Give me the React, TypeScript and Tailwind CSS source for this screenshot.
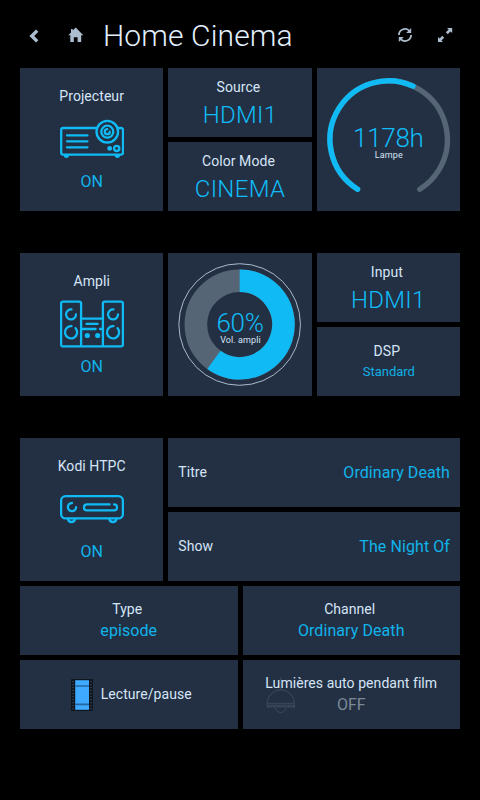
import type { ReactNode } from "react";

const BLUE = "#0fbaf5";

function Tile({ className = "", children }: { className?: string; children: ReactNode }) {
  return <div className={`bg-[#233043] overflow-hidden ${className}`}>{children}</div>;
}

function Label({ className = "", children }: { className?: string; children: ReactNode }) {
  return (
    <div className={`text-sm leading-4 tracking-[0.06px] whitespace-nowrap text-[#d5e5f7] ${className}`}>{children}</div>
  );
}

/** Square switch tile: title, 64px pictogram, state. */
function SwitchTile({ label, state, children }: { label: string; state: string; children: ReactNode }) {
  return (
    <Tile className="flex h-[143px] flex-col items-center pt-5">
      <Label>{label}</Label>
      <svg
        viewBox="0 0 64 64"
        className="mt-[3px] h-16 w-16 shrink-0"
        fill="none"
        stroke={BLUE}
        strokeWidth="2.3"
        strokeLinecap="round"
      >
        {children}
      </svg>
      <div className="mt-px text-base leading-5 text-[#10b4eb]">{state}</div>
    </Tile>
  );
}

/** Half-height tile with a stacked label and value. */
function ValueTile({
  label,
  value,
  size = "lg",
}: {
  label: string;
  value: string;
  size?: "lg" | "md" | "sm";
}) {
  const styles = {
    lg: "mt-1.5 text-2xl leading-7 font-light tracking-[0.3px] text-[#0fbcf8]",
    md: "mt-0.5 text-base leading-6 tracking-[0.08px] text-[#10b4eb]",
    sm: "mt-[3px] pl-px text-[13px] leading-5 text-[#10b0e6]",
  };
  const pad = { lg: "pt-[11px]", md: "pt-[15px]", sm: "pt-4" };
  return (
    <Tile className={`h-[69px] text-center ${pad[size]}`}>
      <Label className="pr-[3px]">{label}</Label>
      <div className={styles[size]}>{value}</div>
    </Tile>
  );
}

function InfoRow({ label, value }: { label: string; value: string }) {
  return (
    <Tile className="flex h-[69px] items-center justify-between px-2.5">
      <Label className="-mt-px">{label}</Label>
      <div className="text-base tracking-[0.08px] text-[#10b4eb]">{value}</div>
    </Tile>
  );
}

function GaugeText({ value, label }: { value: string; label: string }) {
  return (
    <div className="col-start-1 row-start-1 pt-[58px] text-center">
      <div className="text-[26px] leading-6 font-light tracking-[-0.3px] text-[#0fbcf8]">{value}</div>
      <div className="pl-px text-[9px] leading-[10px] tracking-[0.1px] text-[#d5e5f7]">{label}</div>
    </div>
  );
}

function LampGauge() {
  return (
    <Tile className="grid h-[143px] grid-cols-1">
      <svg viewBox="0 0 143.33 143" className="col-start-1 row-start-1 h-[143px] w-full" fill="none" strokeLinecap="round" strokeWidth="5.4">
        <circle cx="71.67" cy="71.5" r="58.7" pathLength="360" strokeDasharray="296 64" transform="rotate(122 71.67 71.5)" stroke="#566576" />
        <circle cx="71.67" cy="71.5" r="58.7" pathLength="360" strokeDasharray="172.5 187.5" transform="rotate(122 71.67 71.5)" stroke={BLUE} />
      </svg>
      <GaugeText value="1178h" label="Lampe" />
    </Tile>
  );
}

function VolumeGauge() {
  return (
    <Tile className="grid h-[143px] grid-cols-1">
      <svg viewBox="0 0 143.33 143" className="col-start-1 row-start-1 h-[143px] w-full" fill="none">
        <circle cx="71.67" cy="71.5" r="60.8" stroke="#a9bacb" strokeWidth="1" />
        <circle cx="71.67" cy="71.5" r="43.8" stroke="#566576" strokeWidth="22.6" />
        <path d="M71.67 27.7A43.8 43.8 0 1 1 45.92 106.93" stroke={BLUE} strokeWidth="22.6" />
      </svg>
      <GaugeText value="60%" label="Vol. ampli" />
    </Tile>
  );
}

function Header() {
  return (
    <header className="flex h-[68px] items-center text-[#acbdcf]">
      <svg viewBox="0 0 10 14" className="mt-[3px] ml-[29px] h-3.5 w-2.5">
        <path d="M8.2 1.6L2.8 7L8.2 12.4" fill="none" stroke="currentColor" strokeWidth="3.4" />
      </svg>
      <svg viewBox="0 0 16 16" className="mt-px ml-[29px] h-4 w-4" fill="currentColor">
        <path d="M7.7 .5L15.3 8.3H13.2V15H9.6V10.3H5.8V15H2.3V8.3H.2L3 5.4V2H4.7V3.6Z" />
      </svg>
      <h1 className="mt-1 ml-[19px] text-[30px] leading-9 font-light tracking-[0.12px] text-[#e2f0ff]">Home Cinema</h1>
      <svg viewBox="0 0 16 16" className="mt-[2px] ml-auto h-4 w-4" fill="none" stroke="currentColor" strokeWidth="1.8">
        <path d="M1.9 8A6.1 6.1 0 0 1 12.1 3.6M14.1 8A6.1 6.1 0 0 1 3.9 12.4" />
        <path d="M14.2 1V6H9.2ZM1.8 15V10H6.8Z" fill="currentColor" stroke="none" />
      </svg>
      <svg viewBox="0 0 16 16" className="mt-[2px] mr-[27px] ml-6 h-4 w-4" fill="currentColor">
        <path d="M15.2 1V6L13.4 4.4L10.8 7.2L8.8 5.2L11.7 2.6L10 1ZM1 15V10L2.7 11.6L5.2 8.8L7.2 10.8L4.4 13.4L6 15Z" />
      </svg>
    </header>
  );
}

export default function App() {
  return (
    <div className="h-[800px] w-[480px] overflow-hidden bg-black font-[Roboto,sans-serif]">
      <Header />
      <main className="flex flex-col gap-[42px] px-5">
        <section className="grid grid-cols-3 gap-[5px]">
          <SwitchTile label="Projecteur" state="ON">
            <path d="M36 21H3Q1.2 21 1.2 23V45.5Q1.2 47.6 3 47.6H61Q63 47.6 63 45.5V23Q63 21 61 21H58.5" />
            <circle cx="47.3" cy="24.7" r="10.8" />
            <circle cx="47.3" cy="24.7" r="6" />
            <path d="M49.8 24.7A2.5 2.5 0 1 1 47.3 22.2" />
            <path d="M7 28.3H27.5M7 34.3H27.5M7 40.3H27.5" />
            <circle cx="49.7" cy="41.4" r="2.4" fill={BLUE} stroke="none" />
            <circle cx="56.7" cy="41.4" r="2.6" />
            <path d="M3.7 48H9.1A2.7 2.9 0 0 1 3.7 48ZM54.7 48H60.1A2.7 2.9 0 0 1 54.7 48Z" fill={BLUE} stroke="none" />
          </SwitchTile>
          <div className="flex flex-col gap-[5px]">
            <ValueTile label="Source" value="HDMI1" />
            <ValueTile label="Color Mode" value="CINEMA" />
          </div>
          <LampGauge />
        </section>

        <section className="grid grid-cols-3 gap-[5px]">
          <SwitchTile label="Ampli" state="ON">
            <rect x="1.1" y="9.6" width="20" height="44.8" rx="2" />
            <rect x="42.9" y="9.6" width="20" height="44.8" rx="2" />
            <path d="M21 26.6H43M21 54.4H43M26.5 31.8H37.6M22 37H35.6M40 37H42.5" />
            <path d="M11.5 17.4A5 5 0 1 0 16 22.5M53.5 17.4A5 5 0 1 0 58 22.5" />
            <path d="M11.5 34.2A6.1 6.1 0 1 0 15.5 36.1M53.5 34.2A6.1 6.1 0 1 0 57.5 36.1" />
            <circle cx="27.3" cy="43.5" r="2.6" fill={BLUE} stroke="none" />
            <circle cx="37.7" cy="43.5" r="2.6" fill={BLUE} stroke="none" />
          </SwitchTile>
          <VolumeGauge />
          <div className="flex flex-col gap-[5px]">
            <ValueTile label="Input" value="HDMI1" />
            <ValueTile label="DSP" value="Standard" size="sm" />
          </div>
        </section>

        <section className="flex flex-col gap-[5px]">
          <div className="grid grid-cols-3 gap-[5px]">
            <SwitchTile label="Kodi HTPC" state="ON">
              <rect x="1.1" y="19.2" width="61.8" height="22.2" rx="4.5" />
              <path d="M12 26A4.1 4.1 0 1 0 16.1 30.2" />
              <path d="M49.7 27.4H27Q24 27.4 24 30.4T27 33.4H54Q57 33.4 57 30.4T54 27.4" />
              <path d="M8 42Q8.5 45 11.5 45T15 42M49.4 42Q49.9 45 52.9 45T56.4 42" />
            </SwitchTile>
            <div className="col-span-2 flex flex-col gap-[5px]">
              <InfoRow label="Titre" value="Ordinary Death" />
              <InfoRow label="Show" value="The Night Of" />
            </div>
          </div>
          <div className="grid grid-cols-2 gap-[5px]">
            <ValueTile label="Type" value="episode" size="md" />
            <ValueTile label="Channel" value="Ordinary Death" size="md" />
            <Tile className="flex h-[69px] items-center justify-center gap-[3px]">
              <svg viewBox="0 0 32 32" className="mt-px h-8 w-8">
                <rect x="5" y="0" width="22" height="32" rx="1" fill="#10161f" />
                <rect x="9.2" y="1.2" width="13.8" height="29.6" fill="#3fa9ff" />
                <path d="M9.2 7H23M9.2 25.3H23" stroke="#23659c" strokeWidth="1.7" />
                <path d="M7 2V31M25 2V31" stroke="#35424f" strokeWidth="1.5" strokeDasharray="1.2 1.8" />
              </svg>
              <Label className="-mt-px">Lecture/pause</Label>
            </Tile>
            <Tile className="relative h-[69px] pt-[15px] text-center">
              <svg
                viewBox="0 0 32 36"
                className="absolute top-[17px] left-[22px] h-9 w-8"
                fill="none"
                stroke="#3a495b"
                strokeWidth="1"
              >
                <path d="M15.8 0V13M2.2 26A13.5 13 0 0 1 29.4 26M1.5 26.3H30M2 28.2H30M2.5 30H29.5" />
                <path d="M2 27V30L3.5 31M29.6 27V30L28 31M10.5 31A5.2 4.4 0 0 0 21 31" />
                <path d="M3 29H29" strokeDasharray="1 1.5" strokeWidth="2" />
              </svg>
              <Label className="relative">Lumières auto pendant film</Label>
              <div className="relative mt-1 text-base leading-5 text-[#7b8998]">OFF</div>
            </Tile>
          </div>
        </section>
      </main>
    </div>
  );
}
